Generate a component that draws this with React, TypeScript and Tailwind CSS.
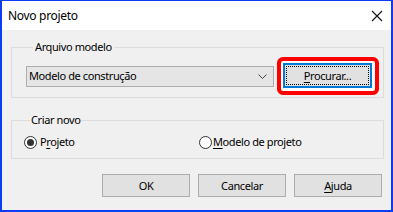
import React from "react";

const font = { fontFamily: '"Noto Sans", "Open Sans", sans-serif' };

function Radio({ checked }: { checked?: boolean }) {
  return (
    <span className="flex h-[13px] w-[13px] items-center justify-center rounded-full border border-[#333333] bg-white">
      {checked && <span className="h-[7px] w-[7px] rounded-full bg-[#333333]" />}
    </span>
  );
}

function Btn({ children }: { children: React.ReactNode }) {
  return (
    <button className="flex h-[23px] w-[88px] items-center justify-center border border-[#adadad] bg-[#e1e1e1] text-black">
      {children}
    </button>
  );
}

export default function App() {
  return (
    <div
      className="flex h-[212px] w-[393px] flex-col border-t border-r-2 border-b-2 border-l-2 border-[#0c3cf4] bg-[#f0f0f0] text-[11px] leading-[16px] tracking-[-0.4px] text-black"
      style={font}
    >
      {/* Title bar */}
      <div className="flex h-[29px] shrink-0 items-center justify-between bg-white pl-[6px] pr-[7px]">
        <span className="text-[12px] tracking-[-0.3px]">Novo projeto</span>
        <svg width="12" height="12" viewBox="0 0 12 12" className="mr-[1px]">
          <path d="M1 1 L11 11 M11 1 L1 11" stroke="#111" strokeWidth="1.1" />
        </svg>
      </div>

      {/* Body */}
      <div className="flex flex-1 flex-col pl-[9px] pr-[7px] pt-[9px]">
        <fieldset className="border border-[#dcdcdc] pb-[2px] pl-[14px] pr-[3px]">
          <legend className="ml-[7px] px-[2px]">Arquivo modelo</legend>
          <div className="mt-[2px] flex items-center gap-[3px]">
            <div className="flex h-[21px] w-[248px] items-center justify-between border border-[#adadad] bg-[#e5e5e5] pl-[2px] pr-[6px]">
              <span>Modelo de construção</span>
              <svg width="9" height="5" viewBox="0 0 9 5">
                <path d="M0.5 0.5 L4.5 4.5 L8.5 0.5" fill="none" stroke="#444" strokeWidth="1" />
              </svg>
            </div>
            <div className="rounded-[6px] border-4 border-[#ff0000] bg-white pb-[3px] pl-[2px] pr-[3px] pt-[2px]">
              <button className="flex h-[25px] w-[89px] items-center justify-center border-2 border-[#0078d7] bg-[#e1e1e1] outline-1 outline-offset-[-4px] outline-dotted outline-black">
                <span>
                  <span className="underline underline-offset-2">P</span>rocurar...
                </span>
              </button>
            </div>
          </div>
        </fieldset>

        <fieldset className="mt-[14px] border border-[#dcdcdc] pb-[8px] pl-[12px] pr-[3px]">
          <legend className="ml-[6px] px-[1px]">Criar novo</legend>
          <div className="mt-[6px] flex h-[16px] items-center">
            <div className="flex w-[175px] items-center gap-[3px]">
              <Radio checked />
              <span>
                P<span className="underline underline-offset-2">r</span>ojeto
              </span>
            </div>
            <div className="flex items-center gap-[1px]">
              <Radio />
              <span>
                <span className="underline underline-offset-2">M</span>odelo de projeto
              </span>
            </div>
          </div>
        </fieldset>

        <div className="mt-[15px] flex justify-end gap-[8px] pr-[2px]">
          <Btn>OK</Btn>
          <Btn>Cancelar</Btn>
          <Btn>
            <span>
              <span className="underline underline-offset-2">A</span>juda
            </span>
          </Btn>
        </div>
      </div>
    </div>
  );
}
